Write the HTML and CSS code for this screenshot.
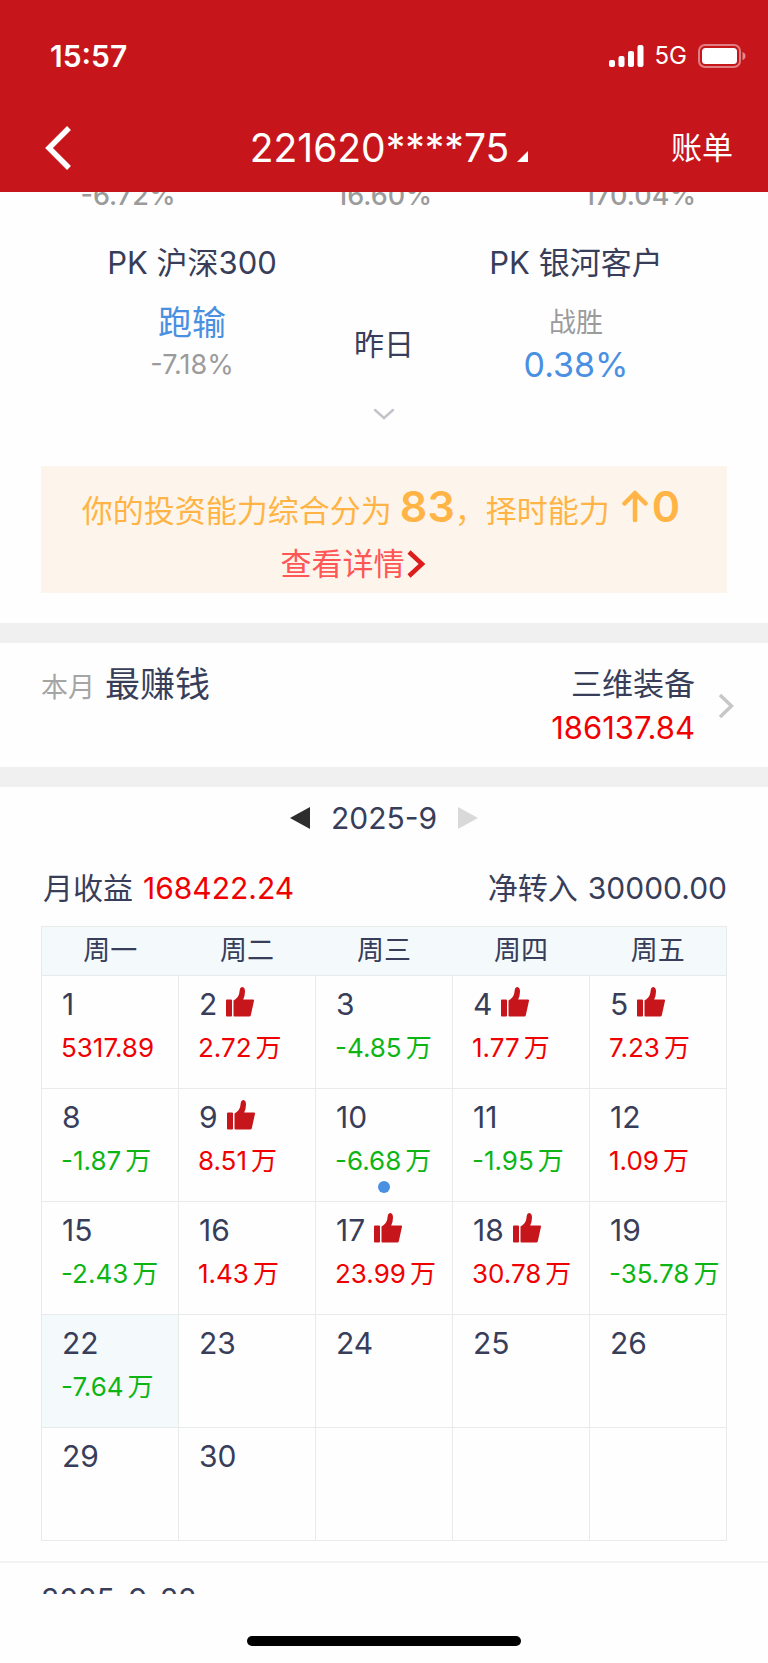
FILE: index.html
```html
<!DOCTYPE html>
<html lang="zh-CN">
<head>
    <meta charset="UTF-8">
    <meta name="viewport" content="width=device-width, initial-scale=1.0">
    <title>收益日历</title>
    <link rel="stylesheet" href="styles.css">
</head>
<body>
    <!-- icono reutilizable del pulgar -->
    <svg class="sprite" width="0" height="0" aria-hidden="true">
        <symbol id="thumb" viewBox="0 0 28 30">
            <path d="M1 12.500h4q1 0 1 1v15q0 1-1 1H1q-1 0-1-1v-15q0-1 1-1zM7.500 13.500q5-2.500 5.800-7.500.3-3 .8-4.500Q14.800 0 16.300 0q2.700.3 2.700 4.500 0 4-1.800 8H27q1.200 0 1 1.200l-3.200 14.500q-.3 1.300-1.600 1.300H8.500q-1 0-1-1z"/>
        </symbol>
    </svg>

    <header class="header">
        <div class="status-bar">
            <span class="time">15:57</span>
            <div class="status-icons">
                <svg width="35" height="22" viewBox="0 0 35 22" fill="#fff">
                    <rect x="0" y="15" width="6" height="7" rx="2"/>
                    <rect x="9.500" y="11" width="6" height="11" rx="2"/>
                    <rect x="19" y="6" width="6" height="16" rx="2"/>
                    <rect x="28.500" y="0" width="6" height="22" rx="2"/>
                </svg>
                <span class="network">5G</span>
                <svg width="48" height="24" viewBox="0 0 48 24">
                    <rect x="1" y="1" width="41" height="22" rx="6" fill="none" stroke="#fff" stroke-opacity=".45" stroke-width="2"/>
                    <rect x="4" y="4" width="35" height="16" rx="3.500" fill="#fff"/>
                    <path d="M44.500 8q3 1 3 4t-3 4z" fill="#fff" fill-opacity=".5"/>
                </svg>
            </div>
        </div>
        <nav class="nav-bar">
            <button class="back" aria-label="返回">
                <svg width="28" height="44" viewBox="0 0 28 44"><path d="M24 2L4 22l20 20" fill="none" stroke="#fff" stroke-width="5.500"/></svg>
            </button>
            <button class="account">221620****75<svg width="11" height="11" viewBox="0 0 11 11"><path d="M11 0v11H0z" fill="#fff"/></svg></button>
            <a class="bill" href="#">账单</a>
        </nav>
    </header>

    <main>
        <section class="totals">
            <span>-6.72%</span>
            <span>16.60%</span>
            <span>170.04%</span>
        </section>

        <section class="pk">
            <div class="pk-titles">
                <h2>PK 沪深300</h2>
                <h2>PK 银河客户</h2>
            </div>
            <div class="pk-body">
                <div class="pk-side">
                    <span class="big">跑输</span>
                    <span class="small">-7.18%</span>
                </div>
                <span class="pk-day">昨日</span>
                <div class="pk-side">
                    <span class="small">战胜</span>
                    <span class="big">0.38%</span>
                </div>
            </div>
            <button class="expand" aria-label="展开">
                <svg width="22" height="12" viewBox="0 0 22 12"><path d="M2 2l9 8 9-8" fill="none" stroke="#c4c4cc" stroke-width="2.500" stroke-linecap="round"/></svg>
            </button>
        </section>

        <section class="banner">
            <p class="ability">你的投资能力综合分为<b>83</b>，择时能力<svg width="26" height="32" viewBox="0 0 26 32"><path d="M13 30V3M2.500 13.500L13 3l10.500 10.500" fill="none" stroke="#ffb445" stroke-width="4.500" stroke-linecap="round" stroke-linejoin="round"/></svg><b class="up">0</b></p>
            <a class="detail" href="#">查看详情<svg width="19" height="28" viewBox="0 0 19 28"><path d="M2 2l13 12L2 26" fill="none" stroke="#dd1c1c" stroke-width="4.500"/></svg></a>
        </section>

        <a class="best" href="#">
            <span class="best-label"><small>本月</small>最赚钱</span>
            <span class="best-stock">
                <span>三维装备</span>
                <span class="red">186137.84</span>
            </span>
            <svg width="16" height="26" viewBox="0 0 16 26"><path d="M2 2l11.500 11L2 24" fill="none" stroke="#c7c7c9" stroke-width="3.500"/></svg>
        </a>

        <section class="calendar">
            <div class="month">
                <button aria-label="上个月"><svg width="20" height="22" viewBox="0 0 20 22"><path d="M20 0v22L0 11z" fill="#2d2d2d"/></svg></button>
                <span>2025-9</span>
                <button aria-label="下个月" disabled><svg width="20" height="22" viewBox="0 0 20 22"><path d="M0 0v22l20-11z" fill="#d9d9d9"/></svg></button>
            </div>
            <div class="summary">
                <span>月收益<span class="value red">168422.24</span></span>
                <span>净转入<span class="value">30000.00</span></span>
            </div>
            <table>
                <thead>
                    <tr><th>周一</th><th>周二</th><th>周三</th><th>周四</th><th>周五</th></tr>
                </thead>
                <tbody>
                    <tr>
                        <td><div class="day">1</div><div class="amount red">5317.89</div></td>
                        <td><div class="day">2<svg class="thumb"><use href="#thumb"/></svg></div><div class="amount red">2.72<i>万</i></div></td>
                        <td><div class="day">3</div><div class="amount green">-4.85<i>万</i></div></td>
                        <td><div class="day">4<svg class="thumb"><use href="#thumb"/></svg></div><div class="amount red">1.77<i>万</i></div></td>
                        <td><div class="day">5<svg class="thumb"><use href="#thumb"/></svg></div><div class="amount red">7.23<i>万</i></div></td>
                    </tr>
                    <tr>
                        <td><div class="day">8</div><div class="amount green">-1.87<i>万</i></div></td>
                        <td><div class="day">9<svg class="thumb"><use href="#thumb"/></svg></div><div class="amount red">8.51<i>万</i></div></td>
                        <td class="marked"><div class="day">10</div><div class="amount green">-6.68<i>万</i></div></td>
                        <td><div class="day">11</div><div class="amount green">-1.95<i>万</i></div></td>
                        <td><div class="day">12</div><div class="amount red">1.09<i>万</i></div></td>
                    </tr>
                    <tr>
                        <td><div class="day">15</div><div class="amount green">-2.43<i>万</i></div></td>
                        <td><div class="day">16</div><div class="amount red">1.43<i>万</i></div></td>
                        <td><div class="day">17<svg class="thumb"><use href="#thumb"/></svg></div><div class="amount red">23.99<i>万</i></div></td>
                        <td><div class="day">18<svg class="thumb"><use href="#thumb"/></svg></div><div class="amount red">30.78<i>万</i></div></td>
                        <td><div class="day">19</div><div class="amount green">-35.78<i>万</i></div></td>
                    </tr>
                    <tr>
                        <td class="selected"><div class="day">22</div><div class="amount green">-7.64<i>万</i></div></td>
                        <td><div class="day">23</div></td>
                        <td><div class="day">24</div></td>
                        <td><div class="day">25</div></td>
                        <td><div class="day">26</div></td>
                    </tr>
                    <tr>
                        <td><div class="day">29</div></td>
                        <td><div class="day">30</div></td>
                        <td></td>
                        <td></td>
                        <td></td>
                    </tr>
                </tbody>
            </table>
        </section>

        <section class="day-detail">2025-9-22</section>
    </main>

    <footer class="home">
        <div class="home-bar"></div>
    </footer>
</body>
</html>
```

FILE: styles.css
```css
* {
    box-sizing: border-box;
}
body {
    margin: 0;
    font-family: Inter, "Noto Sans CJK SC", sans-serif;
    font-size: 30px;
    line-height: 44px;
    color: #383e5a;
    background-color: #fefefe;
}
button {
    display: flex;
    align-items: center;
    padding: 0;
    border: none;
    background: none;
    color: inherit;
    font: inherit;
    cursor: pointer;
}
a {
    color: inherit;
    text-decoration: none;
}
svg {
    flex: none;
}
.sprite {
    position: absolute;
}
.red {
    color: #f00000;
}
.green {
    color: #0db514;
}

/* Cabecera */
.header {
    height: 192px;
    padding-top: 34px;
    background-color: #c6161c;
    color: #fff;
}
.status-bar {
    display: flex;
    justify-content: space-between;
    align-items: center;
    padding: 0 22px 0 50px;
}
.time {
    font-weight: 600;
}
.status-icons {
    display: flex;
    align-items: center;
    gap: 11px;
}
.network {
    font-size: 24px;
}
.nav-bar {
    display: grid;
    grid-template-columns: 1fr auto 1fr;
    align-items: center;
    padding: 0 35px 0 45px;
    margin-top: 48px;
}
.account {
    align-items: baseline;
    gap: 8px;
    font-size: 39px;
}
.bill {
    justify-self: end;
    font-size: 31px;
}

/* Totales, quedan medio ocultos bajo la cabecera */
.totals {
    display: grid;
    grid-template-columns: repeat(3, 1fr);
    align-content: end;
    height: 22px;
    overflow: hidden;
    text-align: center;
    font-size: 27px;
    font-weight: 500;
    line-height: 36px;
    color: #9b9b9b;
}

/* Comparacion PK */
.pk {
    padding-top: 27px;
}
.pk-titles {
    display: grid;
    grid-template-columns: 1fr 1fr;
    text-align: center;
}
.pk-titles h2 {
    margin: 0;
    font-size: 31px;
    font-weight: 400;
}
.pk-body {
    display: grid;
    grid-template-columns: 1fr auto 1fr;
    align-items: center;
    margin-top: 17px;
}
.pk-side {
    display: flex;
    flex-direction: column;
    align-items: center;
    line-height: 42px;
}
.pk-side:first-child {
    padding-left: 30px;
}
.pk-side:last-child {
    padding-right: 30px;
}
.big {
    font-size: 34px;
    color: #4a90e2;
}
.small {
    font-size: 27px;
    color: #9b9b9b;
}
.expand {
    margin: 22px auto 0;
}

/* Aviso de capacidad */
.banner {
    margin: 46px 41px 30px;
    padding: 15px 0 2px;
    text-align: center;
    font-size: 31px;
    background-color: #fdf5eb;
    color: #ffb445;
}
.ability {
    display: flex;
    justify-content: center;
    align-items: baseline;
    margin: 0;
    padding-right: 6px;
    line-height: 50px;
}
.ability b {
    margin-left: 8px;
    font-size: 43px;
    font-weight: 600;
}
.ability svg {
    margin-left: 12px;
}
.ability .up {
    margin-left: 4px;
}
.detail {
    display: flex;
    justify-content: center;
    align-items: center;
    gap: 2px;
    padding-right: 62px;
    line-height: 55px;
    color: #ff5656;
}

/* Mejor accion del mes */
.best {
    display: flex;
    align-items: center;
    padding: 19px 34px 17px 41px;
    border-top: 20px solid #f0f0f0;
    border-bottom: 20px solid #f0f0f0;
}
.best-label {
    align-self: flex-start;
    flex: 1;
    font-size: 35px;
}
.best-label small {
    margin-right: 10px;
    font-size: 27px;
    color: #a5a5a5;
}
.best-stock {
    display: flex;
    flex-direction: column;
    align-items: flex-end;
    margin-right: 23px;
    font-size: 31px;
}

/* Calendario */
.calendar {
    padding: 9px 41px 20px;
    border-bottom: 2px solid #f3f3f3;
}
.month {
    display: flex;
    justify-content: center;
    align-items: center;
    gap: 21px;
}
.summary {
    display: flex;
    justify-content: space-between;
    margin: 26px 0 16px;
    padding-left: 2px;
}
.value {
    margin-left: 10px;
}
table {
    width: 100%;
    border-collapse: collapse;
    table-layout: fixed;
}
th, td {
    padding: 0;
    border: 1px solid #e9eaea;
}
th {
    height: 49px;
    border-width: 1px 0;
    font-size: 27px;
    font-weight: 400;
    background-color: #f4f9fc;
}
th:first-child {
    border-left-width: 1px;
}
th:last-child {
    border-right-width: 1px;
}
td {
    position: relative;
    height: 113px;
    padding: 6px 0 0 19px;
    vertical-align: top;
}
.day {
    display: flex;
    align-items: center;
    padding-left: 1px;
}
.thumb {
    width: 28px;
    height: 30px;
    margin: -4px 0 0 9px;
    fill: #c6161c;
}
.amount {
    font-size: 26px;
    white-space: nowrap;
}
.amount i {
    margin-left: 4px;
    font-style: normal;
}
.selected {
    background-color: #f4f9fc;
}
.marked::after {
    content: "";
    position: absolute;
    left: 50%;
    bottom: 8px;
    width: 12px;
    height: 12px;
    margin-left: -6px;
    border-radius: 50%;
    background-color: #4a90e2;
}

/* Detalle del dia, cortado por la barra inferior */
.day-detail {
    height: 31px;
    padding: 14px 41px 0;
    overflow: hidden;
}
.home {
    display: flex;
    justify-content: center;
    padding: 42px 0 17px;
}
.home-bar {
    width: 274px;
    height: 10px;
    border-radius: 5px;
    background-color: #000;
}
```
